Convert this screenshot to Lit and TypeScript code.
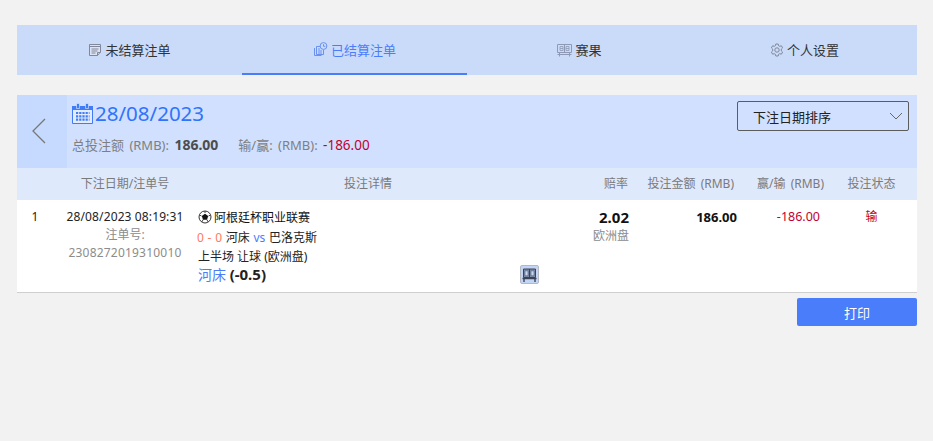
import { LitElement, html, css, svg } from "lit";
import { customElement } from "lit/decorators.js";

const icoOrder = svg`<svg class="ico" viewBox="0 0 14 14" width="14" height="14" fill="none" stroke="currentColor" stroke-width="1"><path d="M1.500 1.500h11v7.500l-3 3.500h-8z" fill="#dbe3f4"/><path d="M1.500 3.500h11"/><path d="M3.500 6h7M3.500 8h6M3.500 10h4"/><path d="M9.500 12.500V9.500h3"/></svg>`;
const icoSettled = svg`<svg class="ico" viewBox="0 0 15 14" width="15" height="14" fill="none" stroke="currentColor" stroke-width="1"><path d="M3.500 4.500h4v-1M3.500 4.500v8h7V8"/><path d="M1.500 6v7.500h7"/><path d="M5 7h2M5 9h4M5 11h4"/><circle cx="10.500" cy="4" r="3.400" fill="#cadbf9"/><path d="M10.500 2.200V4.300h1.800"/></svg>`;
const icoResult = svg`<svg class="ico res" viewBox="0 0 15 14" width="15" height="14" fill="none" stroke="currentColor" stroke-width="1"><path d="M.500 1.500h14v8H.500z"/><path d="M7.500 1.500v8"/><path d="M3 3.500v4h3v-4zM9 3.500v4h3v-4zM3 5.500h3M9 5.500h3" stroke-width=".8"/><path d="M.500 11.500h14M2.500 9.500v4M12.500 9.500v4"/></svg>`;
const icoBoard = svg`<svg viewBox="0 0 15 14" width="15" height="14" fill="none" stroke="currentColor" stroke-width="1"><path d="M1.500 1h12v8.500h-12z" fill="#7f8ea9"/><path d="M7.500 1v8.500"/><path d="M3 2.800h3v5H3zM9 2.800h3v5H9z" fill="#c9d6ee" stroke="#4a5a7a" stroke-width=".6"/><path d="M.500 10.500h14" stroke-width="1.500"/><path d="M2 10v4M13 10v4" stroke-width="1.400"/></svg>`;
const icoGear = svg`<svg class="ico" viewBox="0 0 14 14" width="14" height="14" fill="none" stroke="currentColor" stroke-width="1"><path d="M5.800 1h2.400l.4 1.700 1.100.6 1.700-.5 1.200 2.100-1.300 1.200v1.800l1.300 1.200-1.200 2.100-1.700-.5-1.100.6L8.200 13H5.800l-.4-1.700-1.100-.6-1.700.5-1.200-2.100 1.300-1.200V6.100L1.400 4.900l1.200-2.100 1.700.5 1.100-.6z"/><circle cx="7" cy="7" r="2.200"/></svg>`;
const icoCalendar = svg`<svg viewBox="0 0 21 21" width="21" height="21" fill="none" stroke="#3f7cf5"><path d="M.500 3.500h20v17H.500z" fill="#e3ecff"/><path fill="#3f7cf5" stroke="none" d="M0 3h21v4H0z"/><path fill="#3f7cf5" stroke="#e3ecff" stroke-width=".6" d="M4.500 .500h3v5h-3zM13.500 .500h3v5h-3z"/><path stroke-dasharray="2.200 1" stroke-width="2.200" d="M4 10h13.500M4 13.300h13.500M4 16.600h13.500"/></svg>`;
const icoBall = svg`<svg class="ball" viewBox="0 0 14 14" width="14" height="14"><circle cx="7" cy="7" r="6" fill="#fff" stroke="#333" stroke-width="1"/><path d="M7 3.800l3.200 2.300-1.200 3.700H5L3.800 6.100z" fill="#111"/><path d="M7 1v2M1.500 5l2 1M12.500 5l-2 1M3.800 12l1.400-2.500M10.200 12L8.800 9.500" stroke="#444" stroke-width="1"/></svg>`;

@customElement("app-root")
export class AppRoot extends LitElement {
  static styles = css`
    :host {
      display: block;
      min-height: 441px;
      background: #f2f2f2;
      padding: 25px 16px 0 17px;
      box-sizing: border-box;
      font-family: "Noto Sans", "Noto Sans CJK SC", sans-serif;
      font-size: 12px;
      color: #333;
    }
    .tabs {
      display: grid;
      grid-template-columns: repeat(4, 225px);
      height: 50px;
      background: #cadbf9;
    }
    .tab {
      display: flex;
      align-items: center;
      justify-content: center;
      gap: 3px;
      font-size: 13px;
      color: #333;
      box-sizing: border-box;
      padding-bottom: 1px;
    }
    .tab .ico { color: #80879a; }
    .tab .ico.res { color: #8e9ab5; }
    .tab.active {
      color: #4a7dfa;
      border-bottom: 2px solid #4a7dfa;
      padding-top: 1px;
    }
    .tab.active .ico { color: #6a90f0; }
    .panel { margin-top: 20px; }
    .head {
      display: flex;
      height: 73px;
      background: #d0e0fe;
    }
    .back {
      width: 50px;
      flex: none;
      background: #c6daff;
      display: flex;
      align-items: center;
      justify-content: center;
      padding: 0 6px 2px 0;
      box-sizing: border-box;
      color: #777;
    }
    .summary {
      flex: 1;
      padding: 5px 0 0 5px;
    }
    .date {
      display: flex;
      align-items: center;
      gap: 2px;
      height: 26px;
      font-size: 20.500px;
      color: #2f74fb;
    }
    .totals {
      display: flex;
      gap: 20px;
      margin-top: 10px;
      font-size: 13px;
      word-spacing: 2px;
      color: #7f7f7f;
      line-height: 18px;
    }
    .totals b { color: #4d4d4d; font-size: 14px; }
    .totals .loss { color: #c2002f; font-size: 13.500px; }
    .select {
      height: 28px;
      margin: 6px 8px 0 0;
      flex: none;
      border: 1px solid #5c5c5c;
      border-radius: 2px;
      display: flex;
      align-items: center;
      justify-content: space-between;
      padding: 0 5px 0 15px;
      width: 150px;
      font-size: 13px;
      color: #222;
    }
    .cols, .row {
      display: grid;
      grid-template-columns: 36px 144px 342px 91px 108px 88px 91px;
    }
    .cols {
      height: 32px;
      align-items: center;
      background: #dfe9fc;
      color: #7a7a7a;
      line-height: 32px;
    }
    .c { text-align: center; white-space: nowrap; }
    .r { text-align: right; white-space: nowrap; padding-right: 2px; word-spacing: 2px; }
    .h-stake { padding-right: 4px; }
    .row {
      background: #fff;
      border-bottom: 1px solid #cfcfcf;
      padding-top: 8px;
      height: 84px;
      color: #222;
    }
    .idx { line-height: 18px; }
    .date-cell { text-align: center; line-height: 18px; white-space: nowrap; }
    .stamp { letter-spacing: .12px; }
    .muted { color: #8c8c8c; }
    .ticket { letter-spacing: .2px; }
    .detail { line-height: 19px; position: relative; white-space: nowrap; padding-left: 1px; }
    .league { display: flex; align-items: center; gap: 2px; height: 18px; color: #111; }
    .match { margin-top: 2px; word-spacing: .6px; margin-left: -1px; }
    .score { color: #ff7a59; }
    .vs { color: #4a7dfa; }
    .pick { font-size: 14px; line-height: 18px; color: #4a7dfa; margin-top: -1px; }
    .pick b { color: #222; font-size: 15px; }
    .result-btn {
      position: absolute;
      left: 323px;
      top: 57px;
      width: 19px;
      height: 19px;
      background: #c3d5f5;
      border: 1px solid #b5b9c4;
      border-radius: 2px;
      box-sizing: border-box;
      display: flex;
      align-items: center;
      justify-content: center;
      color: #3c4356;
    }
    .odds { text-align: right; padding-right: 1px; }
    .odds b { display: block; font-size: 15px; line-height: 18px; color: #111; }
    .odds span { display: block; line-height: 20px; color: #8c8c8c; }
    .stake { text-align: right; font-size: 13px; font-weight: bold; color: #111; line-height: 18px; padding-right: 1px; }
    .pl { text-align: right; font-size: 12.500px; color: #c2002f; line-height: 18px; padding-right: 6px; }
    .status { text-align: center; color: #c2002f; line-height: 18px; }
    .actions { display: flex; justify-content: flex-end; margin-top: 5px; }
    .print {
      width: 120px;
      height: 28px;
      background: #4a7dfa;
      color: #fff;
      border-radius: 2px;
      display: flex;
      align-items: center;
      justify-content: center;
      font-size: 13px;
    }
  `;

  render() {
    return html`
      <div class="tabs">
        <div class="tab">${icoOrder}<span>未结算注单</span></div>
        <div class="tab active">${icoSettled}<span>已结算注单</span></div>
        <div class="tab">${icoResult}<span>赛果</span></div>
        <div class="tab">${icoGear}<span>个人设置</span></div>
      </div>
      <div class="panel">
        <div class="head">
          <div class="back">
            <svg viewBox="0 0 14 26" width="14" height="26" fill="none" stroke="currentColor" stroke-width="1.300"><path d="M13 1L1 13l12 12"/></svg>
          </div>
          <div class="summary">
            <div class="date">${icoCalendar}<span>28/08/2023</span></div>
            <div class="totals">
              <span>总投注额 (RMB): <b>186.00</b></span>
              <span>输/赢: (RMB): <span class="loss">-186.00</span></span>
            </div>
          </div>
          <div class="select">
            <span>下注日期排序</span>
            <svg viewBox="0 0 14 8" width="14" height="8" fill="none" stroke="#666" stroke-width="1"><path d="M1 1l6 6 6-6"/></svg>
          </div>
        </div>
        <div class="cols">
          <span></span>
          <span class="c">下注日期/注单号</span>
          <span class="c">投注详情</span>
          <span class="r">赔率</span>
          <span class="r h-stake">投注金额 (RMB)</span>
          <span class="r">赢/输 (RMB)</span>
          <span class="c">投注状态</span>
        </div>
        <div class="row">
          <div class="idx c">1</div>
          <div class="date-cell">
            <div class="stamp">28/08/2023 08:19:31</div>
            <div class="muted">注单号:</div>
            <div class="muted ticket">2308272019310010</div>
          </div>
          <div class="detail">
            <div class="league">${icoBall}<span>阿根廷杯职业联赛</span></div>
            <div class="match"><span class="score">0 - 0</span> 河床 <span class="vs">vs</span> 巴洛克斯</div>
            <div>上半场 让球 (欧洲盘)</div>
            <div class="pick">河床 <b>(-0.5)</b></div>
            <div class="result-btn">${icoBoard}</div>
          </div>
          <div class="odds"><b>2.02</b><span>欧洲盘</span></div>
          <div class="stake">186.00</div>
          <div class="pl">-186.00</div>
          <div class="status">输</div>
        </div>
        <div class="actions"><div class="print">打印</div></div>
      </div>
    `;
  }
}
